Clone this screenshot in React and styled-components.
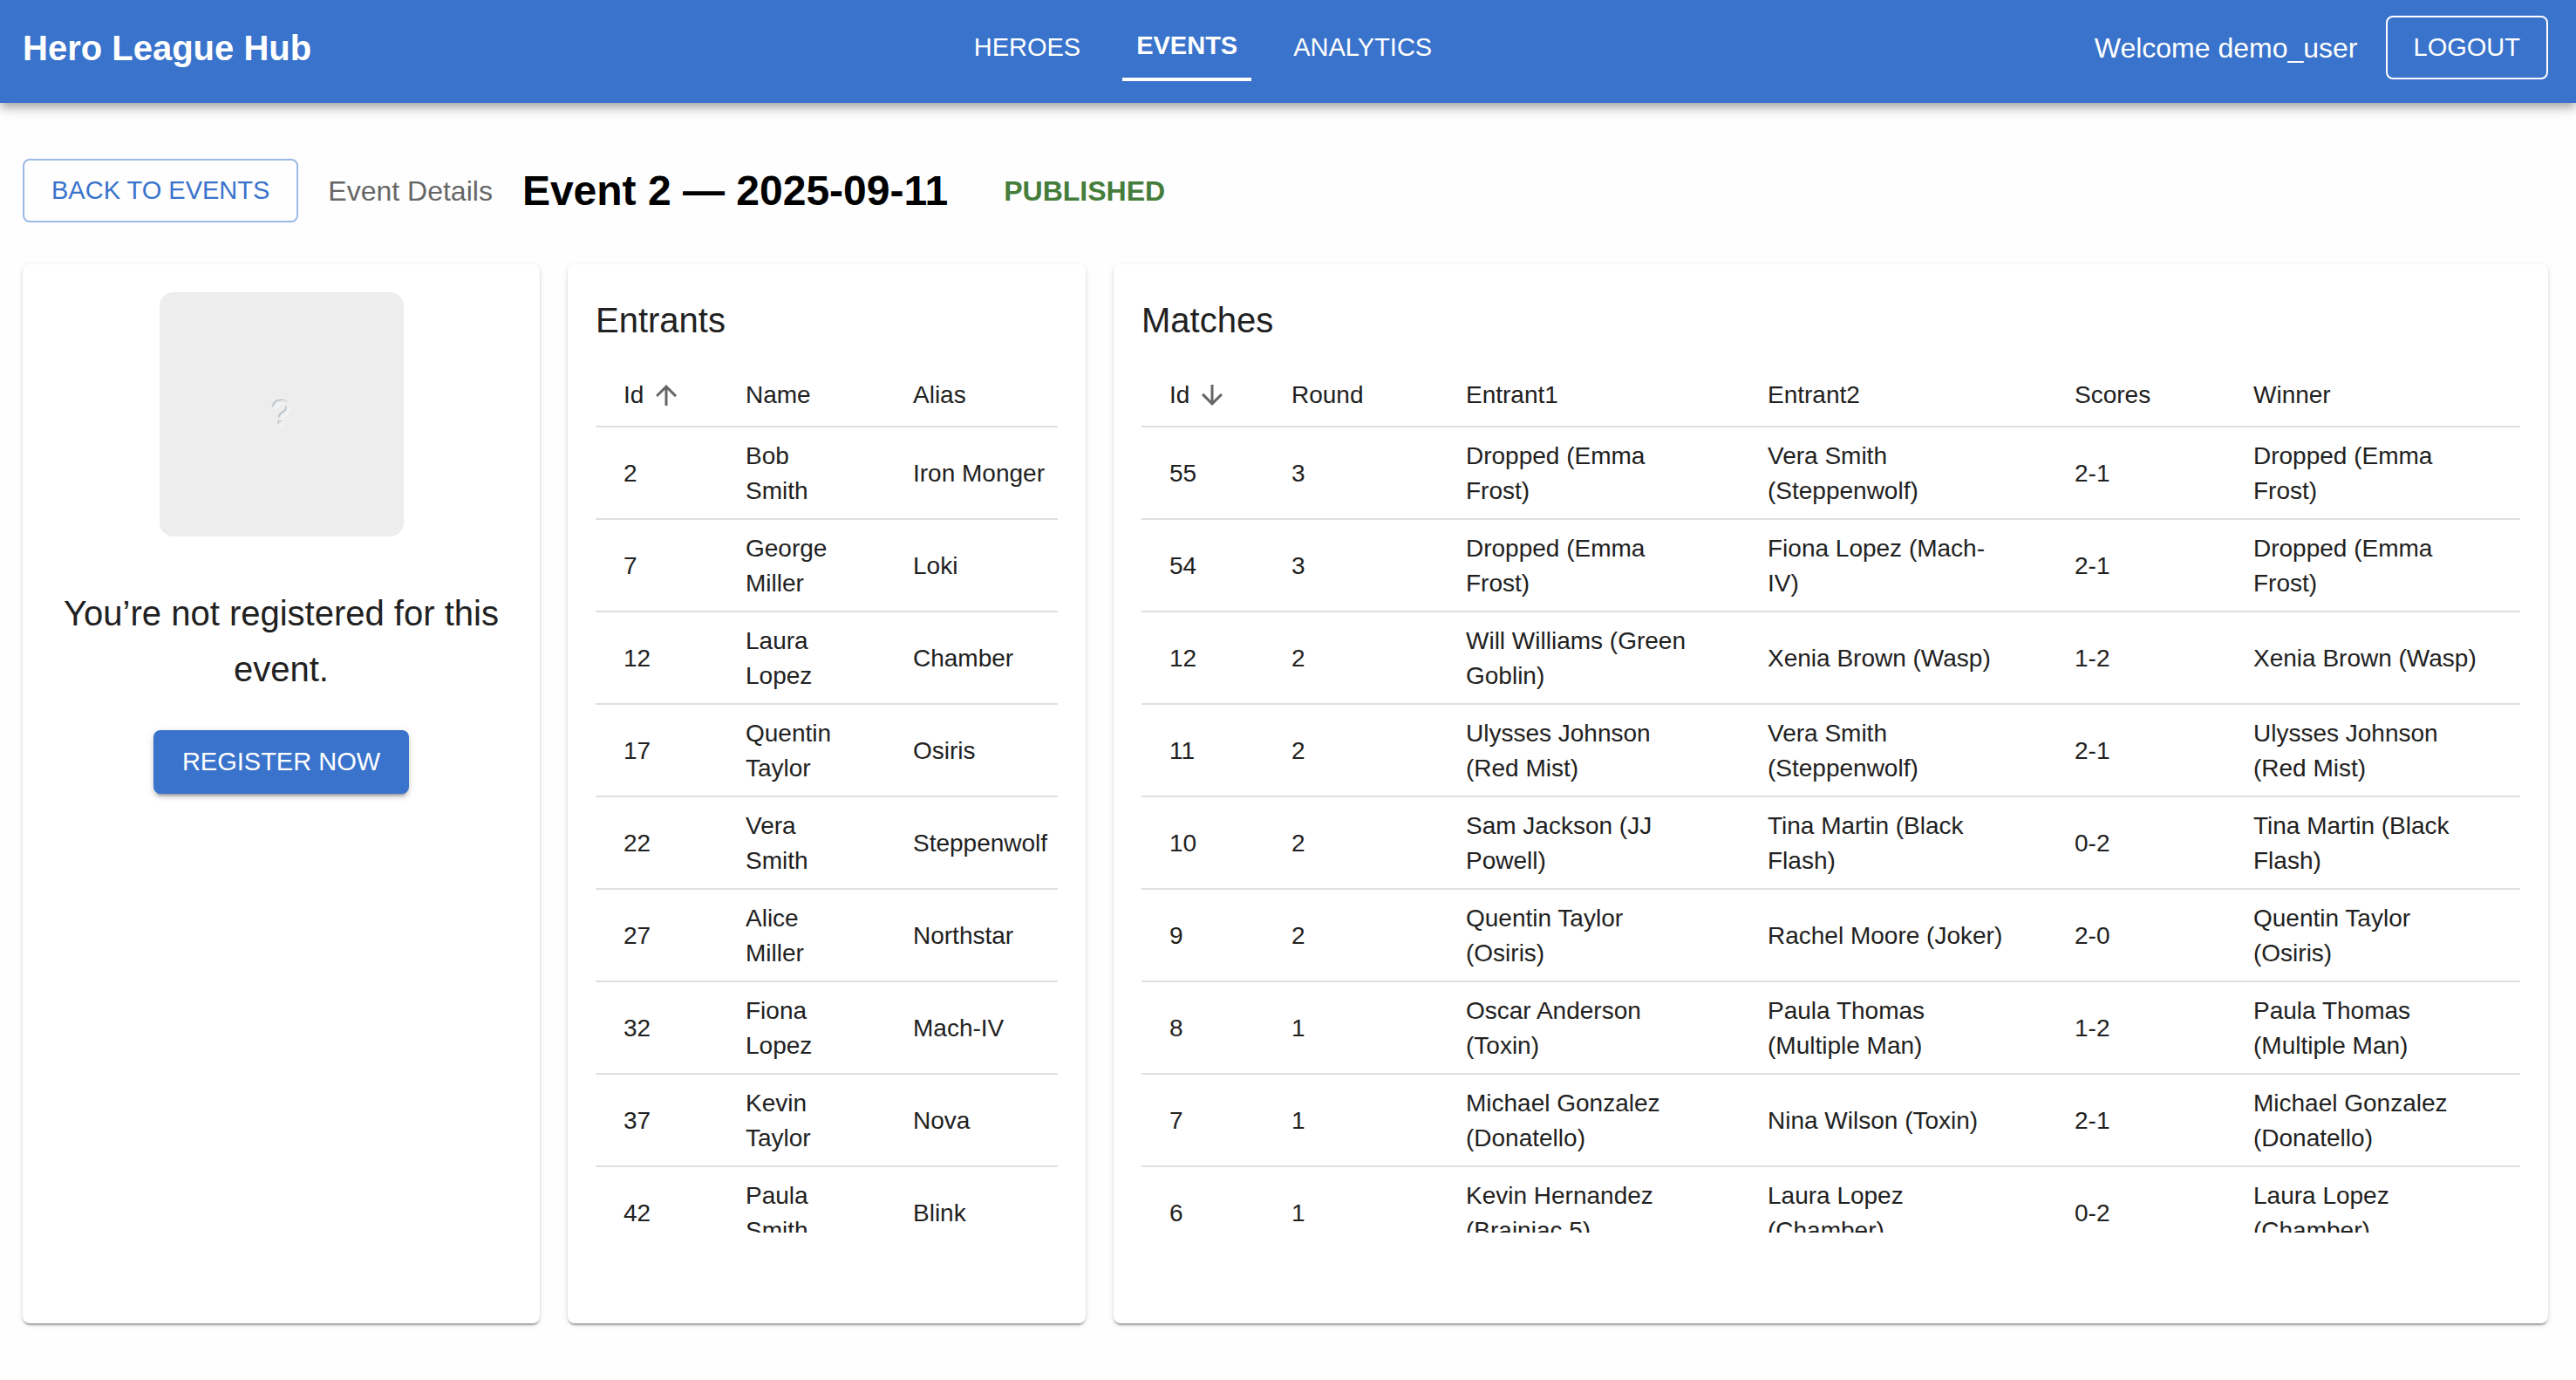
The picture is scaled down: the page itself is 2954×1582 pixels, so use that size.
import React from "react";
import styled, { createGlobalStyle, css } from "styled-components";

const color = {
  primary: "#3973cc",
  primarySoft: "#9cb9e6",
  success: "#457d3c",
  text: "#212121",
  muted: "#666666",
  line: "#e0e0e0",
  placeholder: "#ededed",
};

const GlobalStyle = createGlobalStyle`
  *, *::before, *::after { box-sizing: border-box; }
  body {
    margin: 0;
    background: #fefefe;
    color: ${color.text};
    font-family: "Liberation Sans", Arial, Helvetica, sans-serif;
    font-size: 28px;
    line-height: 40px;
  }
`;

const Page = styled.div`
  display: flex;
  flex-direction: column;
  height: 100vh;
`;

const AppBar = styled.header`
  display: flex;
  align-items: center;
  justify-content: space-between;
  padding: 16px 32px 25px 26px;
  background: ${color.primary};
  color: #fff;
  box-shadow: 0 4px 8px -2px rgba(0, 0, 0, 0.2), 0 8px 10px rgba(0, 0, 0, 0.14),
    0 2px 20px rgba(0, 0, 0, 0.12);
`;

const Brand = styled.div`
  font-size: 40px;
  line-height: 64px;
  font-weight: 700;
`;

const Nav = styled.nav`
  display: flex;
  align-items: center;
  gap: 32px;
`;

const NavLink = styled.a`
  padding: 12px 16px;
  color: #fff;
  font-size: 29px;
  line-height: 49px;
  text-decoration: none;
  text-transform: uppercase;
  ${(p) =>
    p.$active &&
    css`
      font-weight: 700;
      border-bottom: 4px solid #fff;
    `}
`;

const Account = styled.div`
  display: flex;
  align-items: center;
  gap: 32px;
  font-size: 32px;
  line-height: 48px;
`;

const buttonLook = {
  outlined: css`
    padding: 10px 31px;
    border: 2px solid ${color.primarySoft};
    background: transparent;
    color: ${color.primary};
  `,
  inverted: css`
    padding: 10px 30px;
    border: 2px solid #fff;
    background: transparent;
    color: #fff;
  `,
  contained: css`
    padding: 12px 33px;
    border: 0;
    background: ${color.primary};
    color: #fff;
    box-shadow: 0 6px 2px -4px rgba(0, 0, 0, 0.2),
      0 4px 4px rgba(0, 0, 0, 0.14), 0 2px 10px rgba(0, 0, 0, 0.12);
  `,
};

const Button = styled.button`
  border-radius: 8px;
  font-family: inherit;
  font-size: 29px;
  line-height: 49px;
  text-transform: uppercase;
  white-space: nowrap;
  cursor: pointer;
  ${(p) => buttonLook[p.$look]}
`;

const Main = styled.main`
  flex: 1;
  min-height: 0;
  display: flex;
  flex-direction: column;
  gap: 48px;
  padding: 64px 32px 65px 26px;
`;

const TitleRow = styled.div`
  display: flex;
  align-items: center;
  gap: 34px;
`;

const Crumb = styled.span`
  color: ${color.muted};
  font-size: 32px;
  line-height: 48px;
`;

const Title = styled.h1`
  margin: 0;
  color: #000;
  font-size: 48px;
  line-height: 64px;
  font-weight: 700;
`;

const Status = styled.span`
  margin-left: 30px;
  color: ${color.success};
  font-size: 32px;
  line-height: 48px;
  font-weight: 700;
  text-transform: uppercase;
`;

const Panels = styled.div`
  flex: 1;
  min-height: 0;
  display: grid;
  grid-template-columns: 593fr 594fr 1645fr;
  grid-template-rows: minmax(0, 1fr);
  gap: 32px;
`;

const Card = styled.section`
  display: flex;
  flex-direction: column;
  min-width: 0;
  padding: 32px 32px 104px;
  border-radius: 8px;
  background: #fff;
  box-shadow: 0 4px 2px -2px rgba(0, 0, 0, 0.2),
    0 2px 2px rgba(0, 0, 0, 0.14), 0 2px 6px rgba(0, 0, 0, 0.12);
`;

const RegisterCard = styled(Card)`
  align-items: center;
`;

const Avatar = styled.div`
  display: flex;
  align-items: center;
  justify-content: center;
  width: 280px;
  height: 280px;
  padding-bottom: 4px;
  border-radius: 16px;
  background: ${color.placeholder};
  color: ${color.placeholder};
  font-size: 40px;
  text-shadow: 1px 1px 1px #fafafa, -1px -1px 1px #b0b0b0;
`;

const Notice = styled.p`
  margin: 56px 0 38px;
  font-size: 40px;
  line-height: 64px;
  text-align: center;
`;

const CardTitle = styled.h2`
  margin: 0 0 17px;
  font-size: 40px;
  line-height: 64px;
  font-weight: 400;
`;

const TableScroll = styled.div`
  flex: 1;
  min-height: 0;
  overflow: auto;
  scrollbar-width: none;
`;

const Table = styled.table`
  width: 100%;
  table-layout: fixed;
  border-collapse: separate;
  border-spacing: 0;
`;

const Col = styled.col`
  width: ${(p) => p.$width}px;
`;

const cell = css`
  padding: 13px 40px 11px 32px;
  border-bottom: 2px solid ${color.line};
  text-align: left;
  vertical-align: middle;
`;

const HeadCell = styled.th`
  ${cell}
  padding-right: 0;
  font-weight: 400;
  line-height: 48px;
`;

const Cell = styled.td`
  ${cell}
`;

const SortButton = styled.button`
  display: inline-flex;
  align-items: center;
  gap: 8px;
  height: 48px;
  padding: 0;
  border: 0;
  background: none;
  color: inherit;
  font: inherit;
  vertical-align: top;
  cursor: pointer;
`;

const SortIcon = styled.svg`
  width: 36px;
  height: 36px;
  fill: ${color.muted};
`;

const arrowPath = {
  asc: "M4 12l1.41 1.41L11 7.83V20h2V7.83l5.58 5.59L20 12l-8-8-8 8z",
  desc: "M20 12l-1.41-1.41L13 16.17V4h-2v12.17l-5.58-5.59L4 12l8 8 8-8z",
};

const entrantColumns = [
  { label: "Id", width: 140 },
  { label: "Name", width: 192 },
  { label: "Alias", width: 230 },
];

const entrants = [
  ["2", "Bob Smith", "Iron Monger"],
  ["7", "George Miller", "Loki"],
  ["12", "Laura Lopez", "Chamber"],
  ["17", "Quentin Taylor", "Osiris"],
  ["22", "Vera Smith", "Steppenwolf"],
  ["27", "Alice Miller", "Northstar"],
  ["32", "Fiona Lopez", "Mach-IV"],
  ["37", "Kevin Taylor", "Nova"],
  ["42", "Paula Smith", "Blink"],
];

const matchColumns = [
  { label: "Id", width: 140 },
  { label: "Round", width: 200 },
  { label: "Entrant1", width: 346 },
  { label: "Entrant2", width: 352 },
  { label: "Scores", width: 205 },
  { label: "Winner", width: 338 },
];

const matches = [
  ["55", "3", "Dropped (Emma Frost)", "Vera Smith (Steppenwolf)", "2-1", "Dropped (Emma Frost)"],
  ["54", "3", "Dropped (Emma Frost)", "Fiona Lopez (Mach-IV)", "2-1", "Dropped (Emma Frost)"],
  ["12", "2", "Will Williams (Green Goblin)", "Xenia Brown (Wasp)", "1-2", "Xenia Brown (Wasp)"],
  ["11", "2", "Ulysses Johnson (Red Mist)", "Vera Smith (Steppenwolf)", "2-1", "Ulysses Johnson (Red Mist)"],
  ["10", "2", "Sam Jackson (JJ Powell)", "Tina Martin (Black Flash)", "0-2", "Tina Martin (Black Flash)"],
  ["9", "2", "Quentin Taylor (Osiris)", "Rachel Moore (Joker)", "2-0", "Quentin Taylor (Osiris)"],
  ["8", "1", "Oscar Anderson (Toxin)", "Paula Thomas (Multiple Man)", "1-2", "Paula Thomas (Multiple Man)"],
  ["7", "1", "Michael Gonzalez (Donatello)", "Nina Wilson (Toxin)", "2-1", "Michael Gonzalez (Donatello)"],
  ["6", "1", "Kevin Hernandez (Brainiac 5)", "Laura Lopez (Chamber)", "0-2", "Laura Lopez (Chamber)"],
];

function DataTable({ columns, rows, direction }) {
  return (
    <TableScroll>
      <Table>
        <colgroup>
          {columns.map((c) => (
            <Col key={c.label} $width={c.width} />
          ))}
        </colgroup>
        <thead>
          <tr>
            {columns.map((c, i) => (
              <HeadCell key={c.label} scope="col">
                <SortButton type="button">
                  {c.label}
                  {i === 0 && (
                    <SortIcon viewBox="0 0 24 24" aria-hidden="true">
                      <path d={arrowPath[direction]} />
                    </SortIcon>
                  )}
                </SortButton>
              </HeadCell>
            ))}
          </tr>
        </thead>
        <tbody>
          {rows.map((row) => (
            <tr key={row[0]}>
              {row.map((value, i) => (
                <Cell key={columns[i].label}>{value}</Cell>
              ))}
            </tr>
          ))}
        </tbody>
      </Table>
    </TableScroll>
  );
}

export default function App() {
  return (
    <Page>
      <GlobalStyle />
      <AppBar>
        <Brand>Hero League Hub</Brand>
        <Nav>
          <NavLink href="#heroes">Heroes</NavLink>
          <NavLink href="#events" $active aria-current="page">
            Events
          </NavLink>
          <NavLink href="#analytics">Analytics</NavLink>
        </Nav>
        <Account>
          <span>Welcome demo_user</span>
          <Button type="button" $look="inverted">
            Logout
          </Button>
        </Account>
      </AppBar>
      <Main>
        <TitleRow>
          <Button type="button" $look="outlined">
            Back to Events
          </Button>
          <Crumb>Event Details</Crumb>
          <Title>Event 2 — 2025-09-11</Title>
          <Status>Published</Status>
        </TitleRow>
        <Panels>
          <RegisterCard>
            <Avatar>?</Avatar>
            <Notice>You’re not registered for this event.</Notice>
            <Button type="button" $look="contained">
              Register now
            </Button>
          </RegisterCard>
          <Card>
            <CardTitle>Entrants</CardTitle>
            <DataTable columns={entrantColumns} rows={entrants} direction="asc" />
          </Card>
          <Card>
            <CardTitle>Matches</CardTitle>
            <DataTable columns={matchColumns} rows={matches} direction="desc" />
          </Card>
        </Panels>
      </Main>
    </Page>
  );
}
